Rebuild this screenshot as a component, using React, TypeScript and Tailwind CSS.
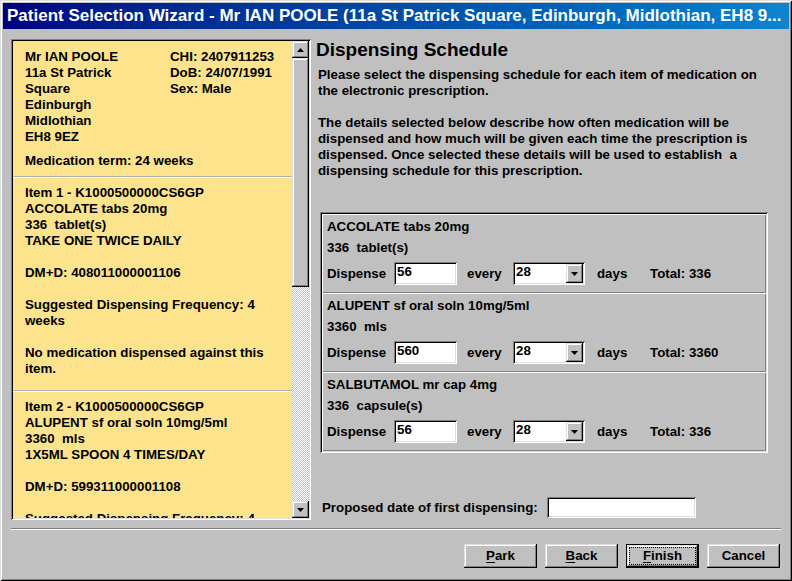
import React from 'react';

const raised = 'shadow-[inset_-1px_-1px_#000,inset_1px_1px_#dfdfdf,inset_-2px_-2px_#808080,inset_2px_2px_#fff]';
const sunken = 'shadow-[inset_1px_1px_#808080,inset_-1px_-1px_#fff,inset_2px_2px_#000,inset_-2px_-2px_#dfdfdf]';

function Tri({ up }: { up?: boolean }) {
  return (
    <svg width="7" height="4" viewBox="0 0 7 4">
      <polygon points={up ? '3.5,0 7,4 0,4' : '0,0 7,0 3.5,4'} fill="#000" />
    </svg>
  );
}

function Lines({ lines }: { lines: string[] }) {
  return (
    <>
      {lines.map((l, i) =>
        l === '' ? <div key={i} className="h-[16px]" /> : <div key={i} className="whitespace-pre-wrap">{l}</div>
      )}
    </>
  );
}

function ScheduleRow({ name, qty, dispense, total }: { name: string; qty: string; dispense: string; total: string }) {
  return (
    <div className="h-[79px] px-[5px] pt-[5px] shadow-[inset_1px_1px_#fff,inset_-1px_-1px_#808080]">
      <div className="h-[16px]">{name}</div>
      <div className="mt-[5px] h-[16px] whitespace-pre">{qty}</div>
      <div className="mt-[6px] flex h-[23px] items-center">
        <span className="w-[67px]">Dispense</span>
        <div className={`flex h-[23px] w-[63px] items-center bg-white px-[3px] pb-[3px] ${sunken}`}>{dispense}</div>
        <span className="ml-[10px] w-[46px]">every</span>
        <div className={`flex h-[23px] w-[72px] bg-white p-[2px] ${sunken}`}>
          <div className="flex flex-1 items-center px-[1px] pb-[3px]">28</div>
          <div className={`flex w-[17px] items-center justify-center bg-[#c0c0c0] ${raised}`}>
            <Tri />
          </div>
        </div>
        <span className="ml-[12px] w-[53px]">days</span>
        <span>Total: {total}</span>
      </div>
    </div>
  );
}

function Button({ label, u, def }: { label: string; u?: boolean; def?: boolean }) {
  const text = u ? (
    <span>
      <span className="underline underline-offset-[2px]">{label[0]}</span>
      {label.slice(1)}
    </span>
  ) : (
    <span>{label}</span>
  );
  if (def) {
    return (
      <div className="h-[24px] w-[73px] border border-black bg-[#c0c0c0]">
        <div className={`h-full w-full p-[2px] ${raised}`}>
          <div className="flex h-full w-full items-center justify-center border border-dotted border-black">{text}</div>
        </div>
      </div>
    );
  }
  return (
    <div className={`flex h-[24px] w-[73px] items-center justify-center bg-[#c0c0c0] ${raised}`}>{text}</div>
  );
}

const item1 = [
  'Item 1 - K1000500000CS6GP',
  'ACCOLATE tabs 20mg',
  '336  tablet(s)',
  'TAKE ONE TWICE DAILY',
  '',
  'DM+D: 408011000001106',
  '',
  'Suggested Dispensing Frequency: 4 weeks',
  '',
  'No medication dispensed against this item.',
];

const item2 = [
  'Item 2 - K1000500000CS6GP',
  'ALUPENT sf oral soln 10mg/5ml',
  '3360  mls',
  '1X5ML SPOON 4 TIMES/DAY',
  '',
  'DM+D: 599311000001108',
  '',
  'Suggested Dispensing Frequency: 4',
];

export default function App() {
  return (
    <div
      className="h-[581px] w-[792px] bg-[#c0c0c0] p-[3px] text-[13.3px] font-bold leading-[16px] text-black shadow-[inset_1px_1px_#dfdfdf,inset_-1px_-1px_#000,inset_2px_2px_#fff,inset_-2px_-2px_#808080]"
      style={{ fontFamily: '"Liberation Sans", Arial, sans-serif' }}
    >
      {/* title bar */}
      <div className="flex h-[26px] items-center overflow-hidden whitespace-nowrap bg-linear-to-r from-[#000080] to-[#1084d0] pl-[4px] text-[17px] text-white">
        Patient Selection Wizard - Mr IAN POOLE (11a St Patrick Square, Edinburgh, Midlothian, EH8 9...
      </div>

      <div className="ml-[8px] mt-[10px] flex">
        {/* patient / items panel */}
        <div className={`flex h-[481px] w-[300px] p-[2px] ${sunken}`}>
          <div className="flex-1 overflow-hidden bg-[#fde48c]">
            <div className="pb-[7px] pl-[12px] pr-[8px] pt-[8px]">
              <div className="flex">
                <div className="w-[145px] pr-[20px]">
                  <div>Mr IAN POOLE</div>
                  <div>11a St Patrick Square</div>
                  <div>Edinburgh</div>
                  <div>Midlothian</div>
                  <div>EH8 9EZ</div>
                </div>
                <div>
                  <div>CHI: 2407911253</div>
                  <div>DoB: 24/07/1991</div>
                  <div>Sex: Male</div>
                </div>
              </div>
              <div className="mt-[8px]">Medication term: 24 weeks</div>
            </div>
            <div className="h-[1px] bg-[#b0b0b0]" />
            <div className="h-[1px] bg-white" />
            <div className="pb-[13px] pl-[12px] pr-[8px] pt-[7px]">
              <Lines lines={item1} />
            </div>
            <div className="h-[1px] bg-[#b0b0b0]" />
            <div className="h-[1px] bg-white" />
            <div className="pl-[12px] pr-[8px] pt-[7px]">
              <Lines lines={item2} />
            </div>
          </div>
          <div className="flex w-[17px] flex-col">
            <div className={`flex h-[17px] items-center justify-center bg-[#c0c0c0] ${raised}`}>
              <Tri up />
            </div>
            <div className={`h-[229px] bg-[#c0c0c0] ${raised}`} />
            <div className="flex-1 bg-[repeating-conic-gradient(#fff_0%_25%,#c0c0c0_0%_50%)] bg-[length:2px_2px]" />
            <div className={`flex h-[17px] items-center justify-center bg-[#c0c0c0] ${raised}`}>
              <Tri />
            </div>
          </div>
        </div>

        {/* schedule */}
        <div className="ml-[5px] flex flex-col">
          <div className="h-[22px] text-[19px] leading-[22px]">Dispensing Schedule</div>
          <div className="mt-[6px] w-[452px] pl-[2px]">
            <p>Please select the dispensing schedule for each item of medication on the electronic prescription.</p>
            <p className="mt-[16px] whitespace-pre-wrap">
              The details selected below describe how often medication will be dispensed and how much will be given each time the prescription is dispensed. Once selected these details will be used to establish  a dispensing schedule for this prescription.
            </p>
          </div>
          <div className={`ml-[4px] mt-[33px] w-[448px] p-[2px] ${sunken}`}>
            <ScheduleRow name="ACCOLATE tabs 20mg" qty="336  tablet(s)" dispense="56" total="336" />
            <ScheduleRow name="ALUPENT sf oral soln 10mg/5ml" qty="3360  mls" dispense="560" total="3360" />
            <ScheduleRow name="SALBUTAMOL mr cap 4mg" qty="336  capsule(s)" dispense="56" total="336" />
          </div>
          <div className="ml-[6px] mt-[44px] flex h-[21px] items-center">
            <span className="w-[225px]">Proposed date of first dispensing:</span>
            <div className={`h-[21px] w-[149px] bg-white ${sunken}`} />
          </div>
        </div>
      </div>

      <div className="mx-[8px] mt-[8px] h-[2px] border-b border-t border-b-white border-t-[#808080]" />

      <div className="mr-[9px] mt-[14px] flex justify-end gap-[8px]">
        <Button label="Park" u />
        <Button label="Back" u />
        <Button label="Finish" u def />
        <Button label="Cancel" />
      </div>
    </div>
  );
}
